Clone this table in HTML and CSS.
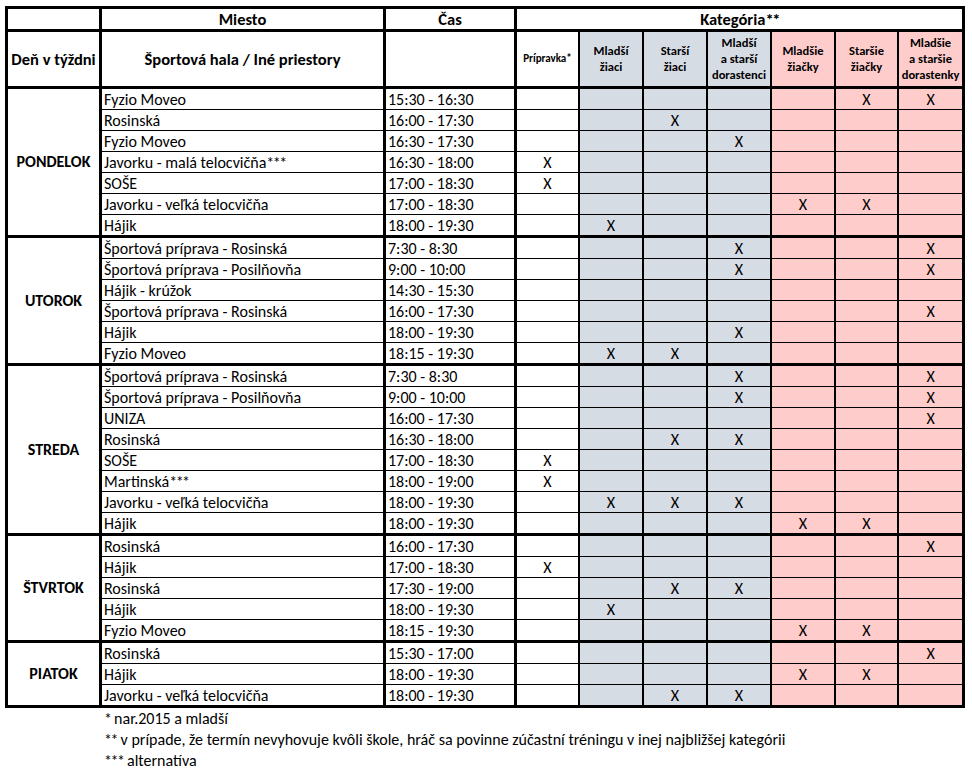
FILE: index.html
```html
<!DOCTYPE html>
<html lang="sk">
<head>
<meta charset="utf-8">
<title>Rozvrh tréningov</title>
<link rel="stylesheet" href="styles.css">
</head>
<body>
<div class="sheet">
<table class="grid">
<colgroup>
<col class="w-day"><col class="w-place"><col class="w-time"><col class="w-63"><col class="w-64"><col class="w-64"><col class="w-64"><col class="w-64"><col class="w-63"><col class="w-66">
</colgroup>
<thead>
<tr class="h1">
<th class="tr"></th>
<th class="tr">Miesto</th>
<th class="tr">Čas</th>
<th class="tr" colspan="7">Kategória<span class="ast">**</span></th>
</tr>
<tr class="h2">
<th class="tr">Deň v týždni</th>
<th class="tr">Športová hala / Iné priestory</th>
<th class="tr"></th>
<th class="cat small">Prípravka*</th>
<th class="cat g">Mladší<br>žiaci</th>
<th class="cat g">Starší<br>žiaci</th>
<th class="cat g">Mladší<br>a starší<br>dorastenci</th>
<th class="cat p">Mladšie<br>žiačky</th>
<th class="cat p">Staršie<br>žiačky</th>
<th class="cat p tr">Mladšie<br>a staršie<br>dorastenky</th>
</tr>
</thead>
<tbody>
<tr class="r"><td class="day end tr" rowspan="7">PONDELOK</td><td class="l">Fyzio Moveo</td><td class="l">15:30 - 16:30</td><td></td><td class="g"></td><td class="g"></td><td class="g"></td><td class="p"></td><td class="p">X</td><td class="p tr">X</td></tr>
<tr class="r"><td class="l">Rosinská</td><td class="l">16:00 - 17:30</td><td></td><td class="g"></td><td class="g">X</td><td class="g"></td><td class="p"></td><td class="p"></td><td class="p tr"></td></tr>
<tr class="r"><td class="l">Fyzio Moveo</td><td class="l">16:30 - 17:30</td><td></td><td class="g"></td><td class="g"></td><td class="g">X</td><td class="p"></td><td class="p"></td><td class="p tr"></td></tr>
<tr class="r"><td class="l">Javorku - malá telocvičňa<span class="ast">***</span></td><td class="l">16:30 - 18:00</td><td>X</td><td class="g"></td><td class="g"></td><td class="g"></td><td class="p"></td><td class="p"></td><td class="p tr"></td></tr>
<tr class="r"><td class="l">SOŠE</td><td class="l">17:00 - 18:30</td><td>X</td><td class="g"></td><td class="g"></td><td class="g"></td><td class="p"></td><td class="p"></td><td class="p tr"></td></tr>
<tr class="r"><td class="l">Javorku - veľká telocvičňa</td><td class="l">17:00 - 18:30</td><td></td><td class="g"></td><td class="g"></td><td class="g"></td><td class="p">X</td><td class="p">X</td><td class="p tr"></td></tr>
<tr class="e"><td class="l">Hájik</td><td class="l">18:00 - 19:30</td><td></td><td class="g">X</td><td class="g"></td><td class="g"></td><td class="p"></td><td class="p"></td><td class="p tr"></td></tr>

<tr class="r"><td class="day end tr" rowspan="6">UTOROK</td><td class="l">Športová príprava - Rosinská</td><td class="l">7:30 - 8:30</td><td></td><td class="g"></td><td class="g"></td><td class="g">X</td><td class="p"></td><td class="p"></td><td class="p tr">X</td></tr>
<tr class="r"><td class="l">Športová príprava - Posilňovňa</td><td class="l">9:00 - 10:00</td><td></td><td class="g"></td><td class="g"></td><td class="g">X</td><td class="p"></td><td class="p"></td><td class="p tr">X</td></tr>
<tr class="r"><td class="l">Hájik - krúžok</td><td class="l">14:30 - 15:30</td><td></td><td class="g"></td><td class="g"></td><td class="g"></td><td class="p"></td><td class="p"></td><td class="p tr"></td></tr>
<tr class="r"><td class="l">Športová príprava - Rosinská</td><td class="l">16:00 - 17:30</td><td></td><td class="g"></td><td class="g"></td><td class="g"></td><td class="p"></td><td class="p"></td><td class="p tr">X</td></tr>
<tr class="r"><td class="l">Hájik</td><td class="l">18:00 - 19:30</td><td></td><td class="g"></td><td class="g"></td><td class="g">X</td><td class="p"></td><td class="p"></td><td class="p tr"></td></tr>
<tr class="e"><td class="l">Fyzio Moveo</td><td class="l">18:15 - 19:30</td><td></td><td class="g">X</td><td class="g">X</td><td class="g"></td><td class="p"></td><td class="p"></td><td class="p tr"></td></tr>

<tr class="r"><td class="day end tr" rowspan="8">STREDA</td><td class="l">Športová príprava - Rosinská</td><td class="l">7:30 - 8:30</td><td></td><td class="g"></td><td class="g"></td><td class="g">X</td><td class="p"></td><td class="p"></td><td class="p tr">X</td></tr>
<tr class="r"><td class="l">Športová príprava - Posilňovňa</td><td class="l">9:00 - 10:00</td><td></td><td class="g"></td><td class="g"></td><td class="g">X</td><td class="p"></td><td class="p"></td><td class="p tr">X</td></tr>
<tr class="r"><td class="l">UNIZA</td><td class="l">16:00 - 17:30</td><td></td><td class="g"></td><td class="g"></td><td class="g"></td><td class="p"></td><td class="p"></td><td class="p tr">X</td></tr>
<tr class="r"><td class="l">Rosinská</td><td class="l">16:30 - 18:00</td><td></td><td class="g"></td><td class="g">X</td><td class="g">X</td><td class="p"></td><td class="p"></td><td class="p tr"></td></tr>
<tr class="r"><td class="l">SOŠE</td><td class="l">17:00 - 18:30</td><td>X</td><td class="g"></td><td class="g"></td><td class="g"></td><td class="p"></td><td class="p"></td><td class="p tr"></td></tr>
<tr class="r"><td class="l">Martinská<span class="ast">***</span></td><td class="l">18:00 - 19:00</td><td>X</td><td class="g"></td><td class="g"></td><td class="g"></td><td class="p"></td><td class="p"></td><td class="p tr"></td></tr>
<tr class="r"><td class="l">Javorku - veľká telocvičňa</td><td class="l">18:00 - 19:30</td><td></td><td class="g">X</td><td class="g">X</td><td class="g">X</td><td class="p"></td><td class="p"></td><td class="p tr"></td></tr>
<tr class="e"><td class="l">Hájik</td><td class="l">18:00 - 19:30</td><td></td><td class="g"></td><td class="g"></td><td class="g"></td><td class="p">X</td><td class="p">X</td><td class="p tr"></td></tr>

<tr class="r"><td class="day end tr" rowspan="5">ŠTVRTOK</td><td class="l">Rosinská</td><td class="l">16:00 - 17:30</td><td></td><td class="g"></td><td class="g"></td><td class="g"></td><td class="p"></td><td class="p"></td><td class="p tr">X</td></tr>
<tr class="r"><td class="l">Hájik</td><td class="l">17:00 - 18:30</td><td>X</td><td class="g"></td><td class="g"></td><td class="g"></td><td class="p"></td><td class="p"></td><td class="p tr"></td></tr>
<tr class="r"><td class="l">Rosinská</td><td class="l">17:30 - 19:00</td><td></td><td class="g"></td><td class="g">X</td><td class="g">X</td><td class="p"></td><td class="p"></td><td class="p tr"></td></tr>
<tr class="r"><td class="l">Hájik</td><td class="l">18:00 - 19:30</td><td></td><td class="g">X</td><td class="g"></td><td class="g"></td><td class="p"></td><td class="p"></td><td class="p tr"></td></tr>
<tr class="e"><td class="l">Fyzio Moveo</td><td class="l">18:15 - 19:30</td><td></td><td class="g"></td><td class="g"></td><td class="g"></td><td class="p">X</td><td class="p">X</td><td class="p tr"></td></tr>

<tr class="r"><td class="day end tr" rowspan="3">PIATOK</td><td class="l">Rosinská</td><td class="l">15:30 - 17:00</td><td></td><td class="g"></td><td class="g"></td><td class="g"></td><td class="p"></td><td class="p"></td><td class="p tr">X</td></tr>
<tr class="r"><td class="l">Hájik</td><td class="l">18:00 - 19:30</td><td></td><td class="g"></td><td class="g"></td><td class="g"></td><td class="p">X</td><td class="p">X</td><td class="p tr"></td></tr>
<tr class="e"><td class="l">Javorku - veľká telocvičňa</td><td class="l">18:00 - 19:30</td><td></td><td class="g"></td><td class="g">X</td><td class="g">X</td><td class="p"></td><td class="p"></td><td class="p tr"></td></tr>
</tbody>
</table>
<div class="notes">
<p><span class="ast">*</span> nar.2015 a mladší</p>
<p><span class="ast">**</span> v prípade, že termín nevyhovuje kvôli škole, hráč sa povinne zúčastní tréningu v inej najbližšej kategórii</p>
<p><span class="ast">***</span> alternatíva</p>
</div>
</div>
</body>
</html>
```
FILE: styles.css
```css
html, body {
  margin: 0;
  padding: 0;
  background: #ffffff;
}

body {
  font-family: "Carlito", "Lato", "Liberation Sans", sans-serif;
  color: #000000;
}

.sheet {
  padding: 6px 0 0 5px;
}

.grid {
  box-sizing: border-box;
  width: 960px;
  table-layout: fixed;
  border-collapse: separate;
  border-spacing: 0;
  border-top: 3px solid #000;
  border-left: 3px solid #000;
}

.w-day { width: 94px; }
.w-place { width: 284px; }
.w-time { width: 131px; }
.w-63 { width: 63px; }
.w-64 { width: 64px; }
.w-66 { width: 66px; }

.grid th,
.grid td {
  box-sizing: border-box;
  padding: 0;
  border-right: 2px solid #000;
  border-bottom: 1px solid #000;
  font-size: 16px;
  line-height: 20px;
  white-space: nowrap;
  overflow: hidden;
  vertical-align: middle;
  text-align: center;
  font-weight: normal;
}

.grid td {
  padding-top: 2px;
  line-height: 18px;
}

.grid th {
  font-weight: bold;
  font-size: 16.5px;
  border-bottom-width: 3px;
}

.grid .tr,
.grid .l {
  border-right-width: 3px;
}

.grid td.l {
  text-align: left;
  padding-left: 2px;
}

.h1 { height: 23px; }
.h2 { height: 57px; }
.r { height: 21px; }
.e { height: 23px; }

.e td,
.grid td.end {
  border-bottom-width: 3px;
}

.grid .cat {
  font-size: 12.5px;
  line-height: 16px;
}

.grid .small {
  font-size: 11px;
}

.grid td.day {
  font-weight: bold;
  padding-top: 0;
}

.ast {
  letter-spacing: -1.5px;
}

.g { background: #d6dce4; }
.p { background: #ffcccc; }

.notes {
  padding-left: 99px;
  font-size: 16px;
  line-height: 21px;
}

.notes p {
  margin: 0;
}
```
